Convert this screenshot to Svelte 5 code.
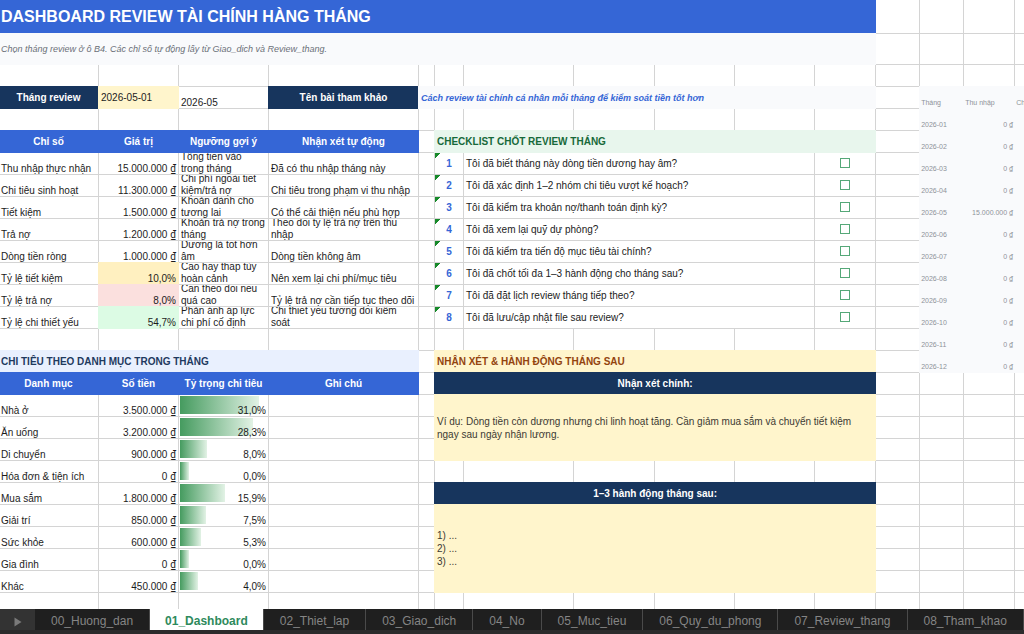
<script lang="ts">
  interface Metric {
    name: string;
    value: string;
    hint: string;
    note: string;
    tone?: string;
  }

  const columns = [98, 80, 90, 150, 16, 29, 110, 81, 80, 80, 61, 44, 44, 51];

  const metrics: Metric[] = [
    { name: "Thu nhập thực nhận", value: "15.000.000 ₫", hint: "Tổng tiền vào trong tháng", note: "Đã có thu nhập tháng này" },
    { name: "Chi tiêu sinh hoạt", value: "11.300.000 ₫", hint: "Chi phí ngoài tiết kiệm/trả nợ", note: "Chi tiêu trong phạm vi thu nhập" },
    { name: "Tiết kiệm", value: "1.500.000 ₫", hint: "Khoản dành cho tương lai", note: "Có thể cải thiện nếu phù hợp" },
    { name: "Trả nợ", value: "1.200.000 ₫", hint: "Khoản trả nợ trong tháng", note: "Theo dõi tỷ lệ trả nợ trên thu nhập" },
    { name: "Dòng tiền ròng", value: "1.000.000 ₫", hint: "Dương là tốt hơn âm", note: "Dòng tiền không âm" },
    { name: "Tỷ lệ tiết kiệm", value: "10,0%", hint: "Cao hay thấp tùy hoàn cảnh", note: "Nên xem lại chi phí/mục tiêu", tone: "fill amber" },
    { name: "Tỷ lệ trả nợ", value: "8,0%", hint: "Cần theo dõi nếu quá cao", note: "Tỷ lệ trả nợ cần tiếp tục theo dõi", tone: "fill rose" },
    { name: "Tỷ lệ chi thiết yếu", value: "54,7%", hint: "Phản ánh áp lực chi phí cố định", note: "Chi thiết yếu tương đối kiểm soát", tone: "fill mint" },
  ];

  let checklist = $state([
    { text: "Tôi đã biết tháng này dòng tiền dương hay âm?", done: false },
    { text: "Tôi đã xác định 1–2 nhóm chi tiêu vượt kế hoạch?", done: false },
    { text: "Tôi đã kiểm tra khoản nợ/thanh toán định kỳ?", done: false },
    { text: "Tôi đã xem lại quỹ dự phòng?", done: false },
    { text: "Tôi đã kiểm tra tiến độ mục tiêu tài chính?", done: false },
    { text: "Tôi đã chốt tối đa 1–3 hành động cho tháng sau?", done: false },
    { text: "Tôi đã đặt lịch review tháng tiếp theo?", done: false },
    { text: "Tôi đã lưu/cập nhật file sau review?", done: false },
  ]);

  const categories = [
    { name: "Nhà ở", amount: "3.500.000 ₫", share: 31.0 },
    { name: "Ăn uống", amount: "3.200.000 ₫", share: 28.3 },
    { name: "Di chuyển", amount: "900.000 ₫", share: 8.0 },
    { name: "Hóa đơn & tiện ích", amount: "0 ₫", share: 0 },
    { name: "Mua sắm", amount: "1.800.000 ₫", share: 15.9 },
    { name: "Giải trí", amount: "850.000 ₫", share: 7.5 },
    { name: "Sức khỏe", amount: "600.000 ₫", share: 5.3 },
    { name: "Gia đình", amount: "0 ₫", share: 0 },
    { name: "Khác", amount: "450.000 ₫", share: 4.0 },
  ];
  const maxShare = Math.max(...categories.map((c) => c.share));

  const sheets = [
    "00_Huong_dan",
    "01_Dashboard",
    "02_Thiet_lap",
    "03_Giao_dich",
    "04_No",
    "05_Muc_tieu",
    "06_Quy_du_phong",
    "07_Review_thang",
    "08_Tham_khao",
  ];
  let active = $state("01_Dashboard");

  function percent(share: number) {
    return share.toFixed(1).replace(".", ",") + "%";
  }

  // shortest bar takes 10% of the cell, longest 90%
  function barWidth(share: number) {
    return 10 + (80 * share) / maxShare;
  }
</script>

{#snippet blanks(count: number)}
  {#each Array(count) as _}
    <td></td>
  {/each}
{/snippet}

{#snippet money(value: string)}
  {#if value.endsWith("₫")}
    {value.slice(0, -1)}<span class="dong">₫</span>
  {:else}
    {value}
  {/if}
{/snippet}

{#snippet month(n: number)}
  <td></td>
  <td class="fill helper">2026-{String(n).padStart(2, "0")}</td>
  <td class="fill helper right">{@render money(n === 5 ? "15.000.000 ₫" : "0 ₫")}</td>
  <td class="fill helper"></td>
{/snippet}

<main>
  <div class="sheet">
    <table>
      <colgroup>
        {#each columns as width}
          <col style="width: {width}px" />
        {/each}
        <col />
      </colgroup>
      <tbody>
        <tr class="title-row">
          <th class="fill blue title" colspan="11">DASHBOARD REVIEW TÀI CHÍNH HÀNG THÁNG</th>
          {@render blanks(4)}
        </tr>
        <tr class="subtitle-row">
          <td class="fill pale subtitle" colspan="11">
            Chọn tháng review ở ô B4. Các chỉ số tự động lấy từ Giao_dich và Review_thang.
          </td>
          {@render blanks(4)}
        </tr>
        <tr>{@render blanks(15)}</tr>
        <tr>
          <th class="fill navy">Tháng review</th>
          <td class="fill cream middle">2026-05-01</td>
          <td>2026-05</td>
          <th class="fill navy">Tên bài tham khảo</th>
          <td class="fill pale article" colspan="7">
            Cách review tài chính cá nhân mỗi tháng để kiểm soát tiền tốt hơn
          </td>
          <td></td>
          <td class="fill helper">Tháng</td>
          <td class="fill helper">Thu nhập</td>
          <td class="fill helper">Chi tiêu</td>
        </tr>
        <tr>
          {@render blanks(11)}
          {@render month(1)}
        </tr>

        <tr>
          <th class="fill blue">Chỉ số</th>
          <th class="fill blue">Giá trị</th>
          <th class="fill blue">Ngưỡng gợi ý</th>
          <th class="fill blue">Nhận xét tự động</th>
          <td></td>
          <th class="fill section green" colspan="6">CHECKLIST CHỐT REVIEW THÁNG</th>
          {@render month(2)}
        </tr>
        {#each metrics as metric, i}
          <tr>
            <td>{metric.name}</td>
            <td class={"right " + (metric.tone ?? "")}>{@render money(metric.value)}</td>
            <td><div class="wrap">{metric.hint}</div></td>
            <td><div class="wrap">{metric.note}</div></td>
            <td></td>
            <td class="number">{i + 1}</td>
            <td class="middle" colspan="4">
              <label for={"check-" + i}>{checklist[i].text}</label>
            </td>
            <td class="tick">
              <input id={"check-" + i} type="checkbox" bind:checked={checklist[i].done} />
            </td>
            {@render month(i + 3)}
          </tr>
        {/each}
        <tr>
          {@render blanks(11)}
          {@render month(11)}
        </tr>

        <tr>
          <th class="fill section sky" colspan="4">CHI TIÊU THEO DANH MỤC TRONG THÁNG</th>
          <td></td>
          <th class="fill section brown" colspan="6">NHẬN XÉT &amp; HÀNH ĐỘNG THÁNG SAU</th>
          {@render month(12)}
        </tr>
        <tr>
          <th class="fill blue">Danh mục</th>
          <th class="fill blue">Số tiền</th>
          <th class="fill blue">Tỷ trọng chi tiêu</th>
          <th class="fill blue">Ghi chú</th>
          <td></td>
          <th class="fill navy" colspan="6">Nhận xét chính:</th>
          {@render blanks(4)}
        </tr>
        {#each categories as category, i}
          <tr>
            <td>{category.name}</td>
            <td class="right">{@render money(category.amount)}</td>
            <td class="share">
              <div class="meter">
                <span class="bar" style="width: {barWidth(category.share)}%"></span>
                <span class="percent">{percent(category.share)}</span>
              </div>
            </td>
            <td></td>
            <td></td>
            {#if i === 0}
              <td class="fill cream note" colspan="6" rowspan="3">
                Ví dụ: Dòng tiền còn dương nhưng chi linh hoạt tăng. Cần giảm mua sắm và chuyển tiết kiệm
                ngay sau ngày nhận lương.
              </td>
            {:else if i === 3}
              {@render blanks(6)}
            {:else if i === 4}
              <th class="fill navy" colspan="6">1–3 hành động tháng sau:</th>
            {:else if i === 5}
              <td class="fill cream note" colspan="6" rowspan="4">1) ...<br />2) ...<br />3) ...</td>
            {/if}
            {@render blanks(4)}
          </tr>
        {/each}
        <tr>{@render blanks(15)}</tr>
      </tbody>
    </table>
  </div>

  <nav>
    <button class="next" aria-label="Next sheets">
      <svg width="8" height="10" viewBox="0 0 8 10"><path d="M0.5 0.5 L7.5 5 L0.5 9.5 Z" /></svg>
    </button>
    {#each sheets as sheet}
      <button class={"tab " + (sheet === active ? "active" : "")} onclick={() => (active = sheet)}>
        {sheet}
      </button>
    {/each}
  </nav>
</main>

<style>
  :global(body) {
    margin: 0;
    background: white;
  }

  main {
    display: flex;
    flex-direction: column;
    height: 100vh;
    overflow: hidden;
    font-family: "Liberation Sans", Arial, sans-serif;
    font-size: 10px;
    line-height: 10px;
    color: #1c1c1c;
  }

  .sheet {
    flex: 1;
    min-height: 0;
    overflow: hidden;
  }

  table {
    width: 100%;
    table-layout: fixed;
    border-spacing: 0;
  }

  tr {
    height: 22px;
  }

  .title-row {
    height: 33px;
  }

  .subtitle-row {
    height: 31px;
  }

  td,
  th {
    box-sizing: border-box;
    padding: 0 2px;
    border-top: 1px solid #d4d4d4;
    border-left: 1px solid #d4d4d4;
    vertical-align: bottom;
    text-align: left;
    white-space: nowrap;
  }

  tr > :first-child {
    border-left: 0;
    padding-left: 1px;
  }

  .title-row > * {
    border-top: 0;
  }

  th {
    vertical-align: middle;
    text-align: center;
  }

  /* filled cells hide the grid lines around them */
  .fill {
    position: relative;
    border-color: var(--fill);
    background: var(--fill);
    box-shadow: 1px 0 0 var(--fill), 0 1px 0 var(--fill), 1px 1px 0 var(--fill);
  }

  .blue {
    --fill: #3566d6;
    color: white;
  }

  .navy {
    --fill: #17355d;
    color: white;
  }

  .pale {
    --fill: #f9fafc;
  }

  .cream {
    --fill: #fff5cc;
  }

  .amber {
    --fill: #fff0c0;
  }

  .rose {
    --fill: #fbe0de;
  }

  .mint {
    --fill: #dcfbe4;
  }

  .green {
    --fill: #e8f6ed;
    color: #17693a;
  }

  .sky {
    --fill: #e9f0fe;
    color: #1f3a5f;
  }

  .brown {
    --fill: #fff5cc;
    color: #93440f;
  }

  .title {
    text-align: left;
    font-size: 16px;
    line-height: 20px;
  }

  .subtitle {
    vertical-align: middle;
    font-size: 9px;
    font-style: italic;
    color: #6b7078;
  }

  .article {
    vertical-align: middle;
    font-size: 9px;
    font-weight: bold;
    font-style: italic;
    color: #3566d6;
  }

  .section {
    text-align: left;
  }

  .middle {
    vertical-align: middle;
  }

  .right {
    text-align: right;
  }

  .dong {
    font-family: Roboto, "Liberation Sans", sans-serif;
    line-height: 0;
  }

  .helper {
    --fill: #f9fafc;
    padding: 0 1px;
    font-size: 7px;
    color: #8e9299;
  }

  /* two lines in a one-line row: the bottom one wins, the top one loses its accents */
  .wrap {
    display: flex;
    align-items: flex-end;
    height: 22px;
    margin-bottom: -1px;
    overflow: hidden;
    line-height: 12px;
    white-space: normal;
  }

  .number {
    vertical-align: middle;
    text-align: center;
    font-weight: bold;
    color: #3566d6;
    background: linear-gradient(135deg, #178a2a 4px, transparent 4px) no-repeat;
  }

  .tick {
    padding-bottom: 1px;
    vertical-align: middle;
    text-align: center;
  }

  .tick input {
    display: block;
    appearance: none;
    box-sizing: border-box;
    width: 10px;
    height: 10px;
    margin: 0 auto;
    border: 1px solid #55a878;
  }

  .tick input:checked {
    background: #55a878;
  }

  .share {
    padding: 0;
  }

  .meter {
    display: grid;
    height: 21px;
    padding-left: 1px;
  }

  .bar,
  .percent {
    grid-area: 1 / 1;
  }

  .bar {
    height: 18px;
    margin-top: 1px;
    background: linear-gradient(to right, #459b5f, #e2f2e5);
  }

  .percent {
    align-self: end;
    padding-right: 2px;
    text-align: right;
  }

  .note {
    vertical-align: middle;
    white-space: normal;
    line-height: 13px;
    color: #3c3a33;
  }

  nav {
    display: flex;
    height: 21px;
    border-bottom: 4px solid #2c2c2c;
    background: #1f1f1f;
  }

  button {
    border: 0;
    font: inherit;
    cursor: pointer;
  }

  .next {
    flex: none;
    width: 35px;
    padding: 0;
    background: #333333;
  }

  .next svg {
    display: block;
    margin: 4px auto 0;
    fill: #7a7a7a;
  }

  .tab {
    flex: none;
    padding: 3px 16px 0;
    border-right: 1px solid #4a4a4a;
    background: #1f1f1f;
    font-size: 12px;
    line-height: 16px;
    color: #858585;
  }

  .tab.active {
    padding: 3px 15px 0;
    background: white;
    font-weight: bold;
    color: #2e8a5c;
  }
</style>
